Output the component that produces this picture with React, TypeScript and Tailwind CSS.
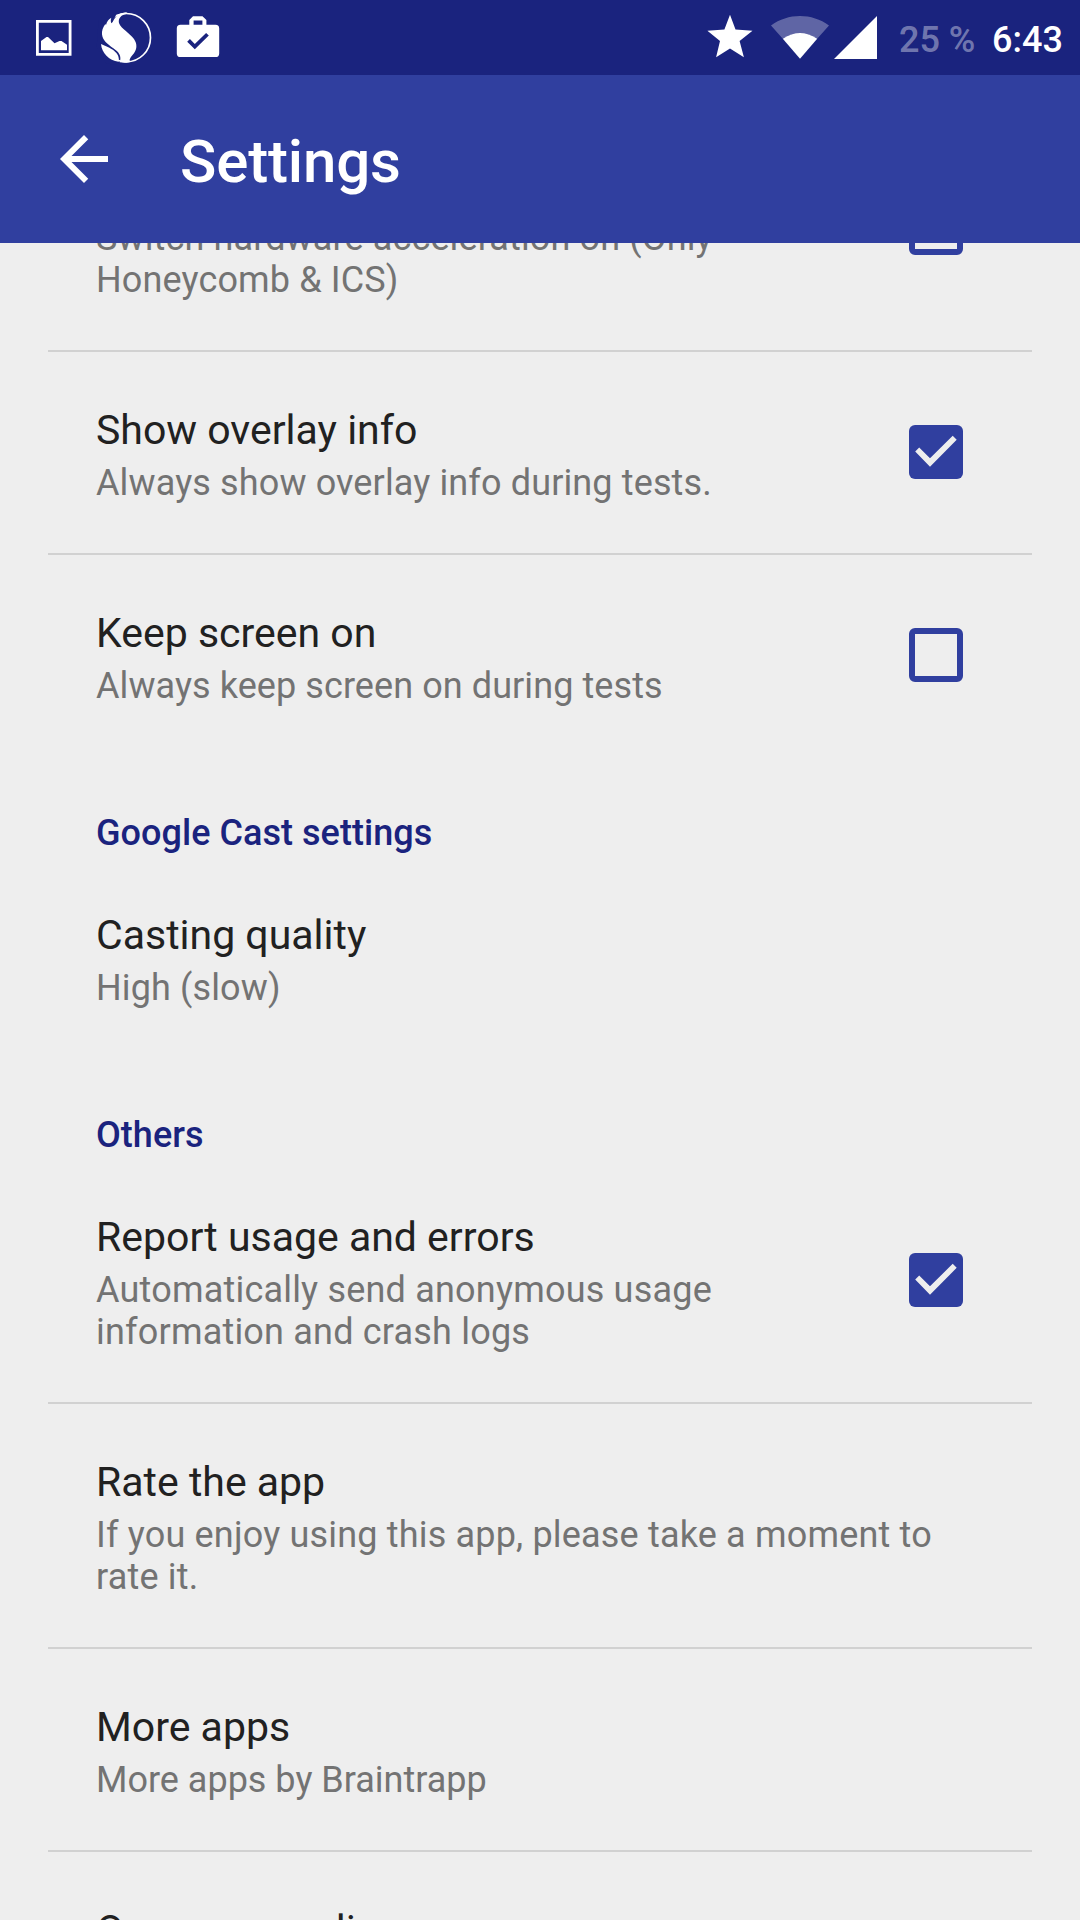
// Android settings screen

import React from "react";

function StatusBar() {
  return (
    <div className="flex h-[75px] items-center justify-between bg-[#1a237e] text-white">
      <svg className="h-[75px] w-[230px]" viewBox="0 0 230 75" fill="currentColor">
        {/* picture */}
        <path
          fillRule="evenodd"
          d="M36 20h35.5v35.7H36zM38.8 22.8v30.1h29.9V22.8z"
        />
        <path d="M41 50.3V41l5.5-4h1.5l6.5 6.3 5-2.3h2l5.5 3.8v5.5z" />
        {/* swirl */}
        <g transform="scale(.3333)">
          <circle cx="379" cy="113" r="72.500" fill="none" stroke="currentColor" strokeWidth="5" />
          <path
            fill="#1a237e"
            d="M296 60L330 30L352 36L345 52L322 76L312 130L340 168L350 195L318 190L290 140z"
          />
          <path d="M380 37C362 38 348 45 338 66L334 70C332 64 332 59 334 53C326 57 321 64 318 75L316 72C309 82 305 92 306 103C308 122 322 132 340 145C356 156 366 168 359 187C371 189 382 189 392 186C386 180 390 175 397 166C413 149 412 132 402 117C388 98 364 87 357 69C354 54 364 44 380 42z" />
          <path d="M303 132C306 160 326 181 356 185C361 156 330 143 303 132z" />
        </g>
        {/* bag with check */}
        <path
          fillRule="evenodd"
          d="M180.500 24.700h8.800V20l3.700-3.800h9.500L206.400 20v4.700h9.100a3.700 3.700 0 0 1 3.700 3.700v25a3.700 3.700 0 0 1-3.700 3.700h-35a3.700 3.700 0 0 1-3.700-3.700v-25a3.700 3.700 0 0 1 3.700-3.700zM193.600 20.500v4.200h8.800v-4.200zM187.200 41.800l7.600 7.500 14-13.700-2.700-2.700-11.300 11-4.900-4.900z"
        />
      </svg>

      <div className="flex items-center">
        <svg className="h-[75px] w-[180px]" viewBox="700 0 180 75" fill="currentColor">
          <path d="M730 14.800l5.500 14.700 17 1.300-12.900 10.300 4.300 16.200-13.900-8.900-13.900 8.900 3.900-16.200-12.600-10.300 17-1.300z" />
          <path
            d="M771 25.500C788 12.800 812 12.800 829 25.500L817.200 38.700C806 31.200 794 31.200 782.800 38.700z"
            fillOpacity="0.3"
          />
          <path d="M782.800 38.700C794 31.200 806 31.200 817.200 38.700L800 58.700z" />
          <path d="M834 59l43-43v43z" />
        </svg>
        <span className="w-[111px] pt-[4px] pl-[19px] text-[36px] leading-[42px] font-medium text-white/40">
          25 %
        </span>
        <span className="w-[89px] pt-[4px] pl-px text-[36px] leading-[42px] font-medium">6:43</span>
      </div>
    </div>
  );
}

function Toolbar() {
  return (
    <div className="flex h-[168px] items-center bg-[#303f9f] pl-12 text-white">
      <svg className="h-[72px] w-[72px]" viewBox="0 0 24 24" fill="currentColor">
        <path d="M20 11H7.830l5.590-5.590L12 4l-8 8 8 8 1.410-1.410L7.830 13H20v-2z" />
      </svg>
      <h1 className="pt-[5px] pl-[60px] text-[60px] leading-[70px] font-medium tracking-[-0.15px]">
        Settings
      </h1>
    </div>
  );
}

function Checkbox({ checked }: { checked: boolean }) {
  if (!checked) {
    return <div className="mb-px h-[54px] w-[54px] rounded-[6px] border-6 border-[#303f9f]" />;
  }
  return (
    <div className="mb-px h-[54px] w-[54px] rounded-[6px] bg-[#303f9f]">
      <svg viewBox="0 0 54 54" fill="#eeeeee">
        <path d="M6.200 26.500l4-4L21 33.300 43.700 10.800l4 4L21 41.700z" />
      </svg>
    </div>
  );
}

type RowProps = {
  title?: string;
  summary?: string;
  summaryClass?: string;
  checked?: boolean;
  divider?: boolean;
};

function Row({
  title,
  summary,
  summaryClass = "tracking-[0.13px]",
  checked,
  divider = true,
}: RowProps) {
  return (
    <div className="px-12">
      <div className="flex items-center justify-between pr-[69px] pl-12">
        <div className="pt-[53px] pb-[49px]">
          <div className="h-[49px] text-[41px] leading-[50px] text-[#212121]">{title}</div>
          <div
            className={`mt-2 min-h-[42px] text-[36px] leading-[42px] whitespace-pre text-[#737373] ${summaryClass}`}
          >
            {summary}
          </div>
        </div>
        {checked !== undefined && <Checkbox checked={checked} />}
      </div>
      {divider && <div className="h-[2px] bg-[#d1d1d1]" />}
    </div>
  );
}

function Category({ children }: { children: React.ReactNode }) {
  return (
    <h2 className="h-[101px] pt-[56px] pl-24 text-[36px] leading-[42px] font-medium tracking-[0.04px] text-[#1a237e]">
      {children}
    </h2>
  );
}

function App() {
  return (
    <div className="flex h-[1920px] w-[1080px] flex-col overflow-hidden bg-[#eeeeee] font-['Roboto',sans-serif]">
      <StatusBar />
      <Toolbar />
      <div className="min-h-0 flex-1 overflow-hidden">
        {/* list is scrolled, the first row is partly under the toolbar */}
        <div className="-mt-[136px]">
          <Row summary={"Switch hardware acceleration on (Only\nHoneycomb & ICS)"} checked={false} />
          <Row title="Show overlay info" summary="Always show overlay info during tests." checked />
          <Row
            title="Keep screen on"
            summary="Always keep screen on during tests"
            summaryClass="tracking-[0.08px]"
            checked={false}
            divider={false}
          />
          <Category>Google Cast settings</Category>
          <Row title="Casting quality" summary="High (slow)" divider={false} />
          <Category>Others</Category>
          <Row
            title="Report usage and errors"
            summary={"Automatically send anonymous usage\ninformation and crash logs"}
            summaryClass="tracking-[0.2px]"
            checked
          />
          <Row
            title="Rate the app"
            summary={"If you enjoy using this app, please take a moment to\nrate it."}
            summaryClass="tracking-[0.18px]"
          />
          <Row
            title="More apps"
            summary="More apps by Braintrapp"
            summaryClass="tracking-normal"
          />
          <Row title="Open source licenses" divider={false} />
        </div>
      </div>
    </div>
  );
}

export default App;
